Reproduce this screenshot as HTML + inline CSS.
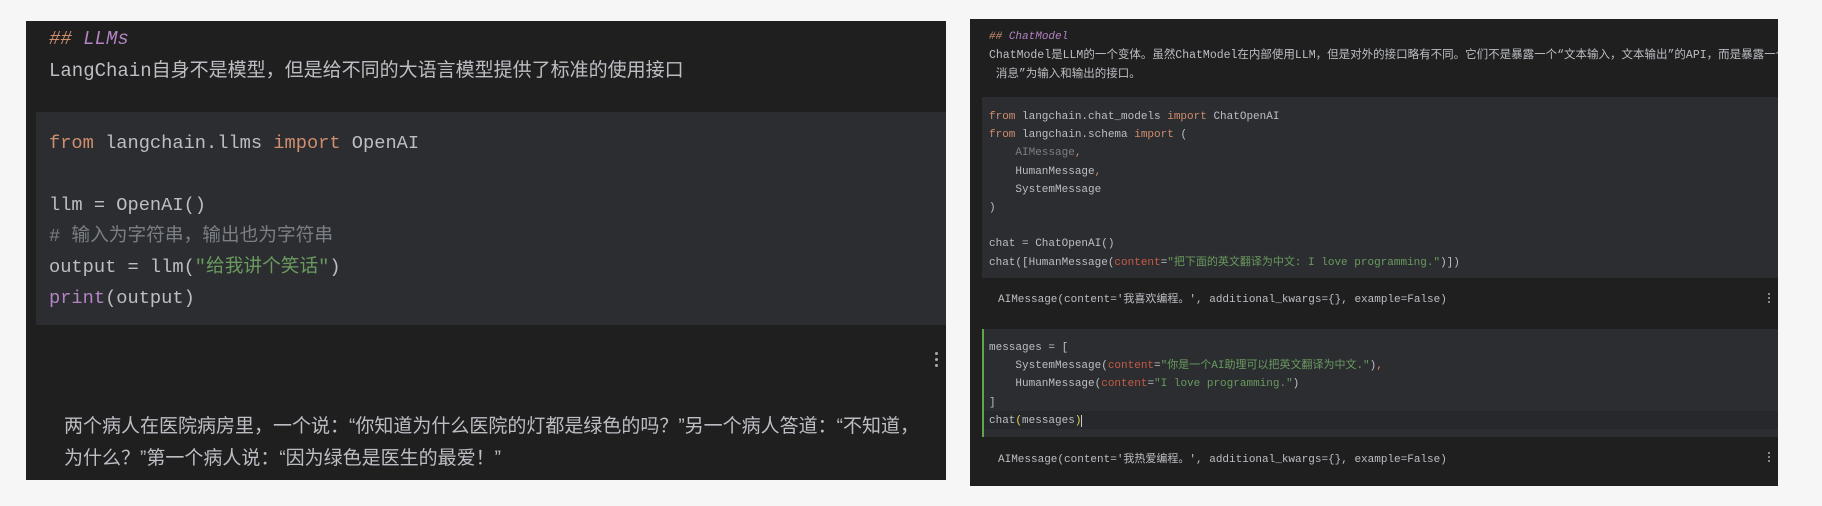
<!DOCTYPE html>
<html><head><meta charset="utf-8"><style>
body{margin:0;width:1822px;height:506px;background:#f6f6f6;position:relative;overflow:hidden;font-family:"Liberation Mono","Noto Sans CJK SC",monospace;color:#bcbec4}
.p{position:absolute;background:#1f1f1f}
.a{position:absolute;white-space:pre;overflow:hidden}
.o{color:#cf8e6d}.pu{color:#b383c4}.g{color:#6a9a5f}.c{color:#7a7e85}.r{color:#c75a45}.y{color:#e8d44d}
.k{position:absolute;width:3px}
.k i{display:block;width:3px;height:3px;border-radius:50%;background:#aaa;margin-bottom:3px}
</style></head><body>
<div class="p" style="left:26px;top:21px;width:920px;height:459px"></div>
<div class="a" style="left:49px;top:26px;font-size:19px;line-height:26px;font-style:italic"><span class="o">##</span> <span class="pu">LLMs</span></div>
<div class="a" style="left:49px;top:57px;font-size:19px;line-height:28px">LangChain自身不是模型，但是给不同的大语言模型提供了标准的使用接口</div>
<div class="p" style="left:36px;top:112px;width:910px;height:213px;background:#2b2d30"></div>
<div class="a" style="left:49px;top:128px;font-size:18.7px;line-height:31px"><span class="o">from</span> langchain.llms <span class="o">import</span> OpenAI

llm = OpenAI()
<span class="c"># 输入为字符串，输出也为字符串</span>
output = llm(<span class="g">"给我讲个笑话"</span>)
<span class="pu">print</span>(output)</div>
<div class="k" style="left:935px;top:352px"><i></i><i></i><i></i></div>
<div class="a" style="left:64px;top:411px;font-size:19px;line-height:32px;font-family:'Liberation Sans','Noto Sans CJK SC',sans-serif">两个病人在医院病房里，一个说：“你知道为什么医院的灯都是绿色的吗？”另一个病人答道：“不知道，
为什么？”第一个病人说：“因为绿色是医生的最爱！”</div>

<div class="p" style="left:970px;top:19px;width:808px;height:467px"></div>
<div class="a" style="left:989px;top:29px;font-size:11px;line-height:17px;font-style:italic"><span class="o">##</span> <span class="pu">ChatModel</span></div>
<div class="a" style="left:989px;top:46px;width:789px;font-size:11.5px;line-height:19px">ChatModel是LLM的一个变体。虽然ChatModel在内部使用LLM，但是对外的接口略有不同。它们不是暴露一个“文本输入，文本输出”的API，而是暴露一个以“聊天
 消息”为输入和输出的接口。</div>
<div class="p" style="left:982px;top:97px;width:796px;height:181px;background:#2b2d30"></div>
<div class="a" style="left:989px;top:108px;font-size:11px;line-height:18.2px"><span class="o">from</span> langchain.chat_models <span class="o">import</span> ChatOpenAI
<span class="o">from</span> langchain.schema <span class="o">import</span> (
    <span class="c">AIMessage</span><span class="o">,</span>
    HumanMessage<span class="o">,</span>
    SystemMessage
)

chat = ChatOpenAI()
chat([HumanMessage(<span class="r">content</span>=<span class="g">"把下面的英文翻译为中文: I love programming."</span>)])</div>
<div class="a" style="left:998px;top:291px;font-size:11px;line-height:18px">AIMessage(content='我喜欢编程。', additional_kwargs={}, example=False)</div>
<div class="k" style="left:1768px;top:293px"><i style="width:2px;height:2px;margin-bottom:2px"></i><i style="width:2px;height:2px;margin-bottom:2px"></i><i style="width:2px;height:2px"></i></div>
<div class="p" style="left:982px;top:329px;width:796px;height:108px;background:#2b2d30"></div>
<div class="p" style="left:984px;top:411px;width:794px;height:18px;background:#26282b"></div>
<div class="p" style="left:982px;top:329px;width:2px;height:108px;background:#5fa54a"></div>
<div class="a" style="left:989px;top:339px;font-size:11px;line-height:18.2px">messages = [
    SystemMessage(<span class="r">content</span>=<span class="g">"你是一个AI助理可以把英文翻译为中文."</span>)<span class="o">,</span>
    HumanMessage(<span class="r">content</span>=<span class="g">"I love programming."</span>)
]
chat<span class="y">(</span>messages<span class="y">)</span><span style="border-left:1px solid #ccc"></span></div>
<div class="a" style="left:998px;top:451px;font-size:11px;line-height:18px">AIMessage(content='我热爱编程。', additional_kwargs={}, example=False)</div>
<div class="k" style="left:1768px;top:452px"><i style="width:2px;height:2px;margin-bottom:2px"></i><i style="width:2px;height:2px;margin-bottom:2px"></i><i style="width:2px;height:2px"></i></div>
</body></html>
